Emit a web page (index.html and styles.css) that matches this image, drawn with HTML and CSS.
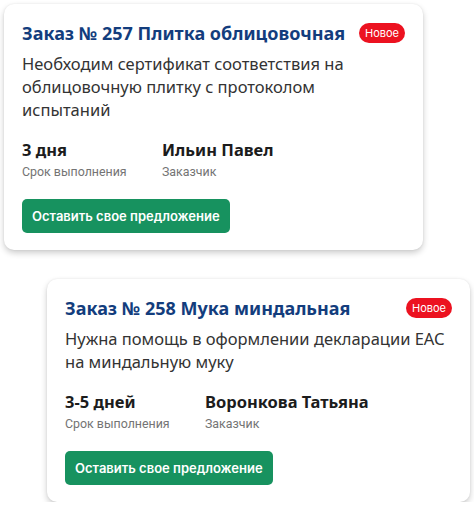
FILE: index.html
```html
<!DOCTYPE html>
<html lang="ru">
<head>
<meta charset="utf-8">
<title>Заказы</title>
<link rel="stylesheet" href="styles.css">
</head>
<body>
<div class="list">
  <article class="card card-first">
    <div class="card-head">
      <h2 class="card-title">Заказ № 257 Плитка облицовочная</h2>
      <span class="badge">Новое</span>
    </div>
    <p class="card-desc">Необходим сертификат соответствия на облицовочную плитку с протоколом испытаний</p>
    <div class="stats">
      <div class="stat">
        <div class="stat-value">3 дня</div>
        <div class="stat-label">Срок выполнения</div>
      </div>
      <div class="stat">
        <div class="stat-value">Ильин Павел</div>
        <div class="stat-label">Заказчик</div>
      </div>
    </div>
    <button class="offer-btn">Оставить свое предложение</button>
  </article>

  <article class="card card-second">
    <div class="card-head">
      <h2 class="card-title">Заказ № 258 Мука миндальная</h2>
      <span class="badge">Новое</span>
    </div>
    <p class="card-desc">Нужна помощь в оформлении декларации ЕАС на миндальную муку</p>
    <div class="stats">
      <div class="stat">
        <div class="stat-value">3-5 дней</div>
        <div class="stat-label">Срок выполнения</div>
      </div>
      <div class="stat">
        <div class="stat-value">Воронкова Татьяна</div>
        <div class="stat-label">Заказчик</div>
      </div>
    </div>
    <button class="offer-btn">Оставить свое предложение</button>
  </article>
</div>
</body>
</html>
```
FILE: styles.css
```css
html, body {
  margin: 0;
  padding: 0;
  background: #ffffff;
}

body {
  font-family: "Noto Sans", "Open Sans", sans-serif;
  color: #2b2b2b;
}

.list {
  display: flex;
  flex-direction: column;
  align-items: flex-start;
  padding: 4px 0 0 0;
}

.card {
  box-sizing: border-box;
  background: #fff;
  border-radius: 10px;
  box-shadow: 0 3px 6px rgba(0, 0, 0, 0.2), 0 0 2px rgba(0, 0, 0, 0.08);
  padding: 17px 18px 17px 18px;
  display: flex;
  flex-direction: column;
  align-items: flex-start;
}

.card-first {
  margin-left: 4px;
  width: 419px;
}

.card-second {
  margin-left: 47px;
  margin-top: 29px;
  width: 423px;
}

.card-head {
  align-self: stretch;
  display: flex;
  justify-content: space-between;
  align-items: center;
}

.card-title {
  margin: 0;
  font-size: 18px;
  font-weight: 700;
  line-height: 24px;
  color: #133d7d;
}

.badge {
  background: #ec1220;
  color: #fff;
  font-family: "Inter", "Noto Sans", sans-serif;
  font-size: 11px;
  line-height: 20px;
  padding: 0 6px;
  border-radius: 10px;
}

.card-desc {
  margin: 7px 0 0 0;
  font-size: 16.5px;
  line-height: 23px;
  color: #333;
}

.stats {
  margin-top: 18px;
  display: grid;
  grid-template-columns: 140px auto;
}

.stat-value {
  font-size: 16.5px;
  font-weight: 700;
  line-height: 22px;
  color: #1c1c1c;
}

.stat-label {
  margin-top: 2px;
  font-family: "Roboto", sans-serif;
  font-size: 12.4px;
  line-height: 18px;
  color: #747474;
}

.offer-btn {
  margin-top: 18px;
  border: 0;
  border-radius: 5px;
  background: #17925f;
  color: #fff;
  font-family: "Inter", sans-serif;
  font-weight: 600;
  font-size: 13px;
  height: 34px;
  padding: 0 10px;
  cursor: pointer;
}
```
